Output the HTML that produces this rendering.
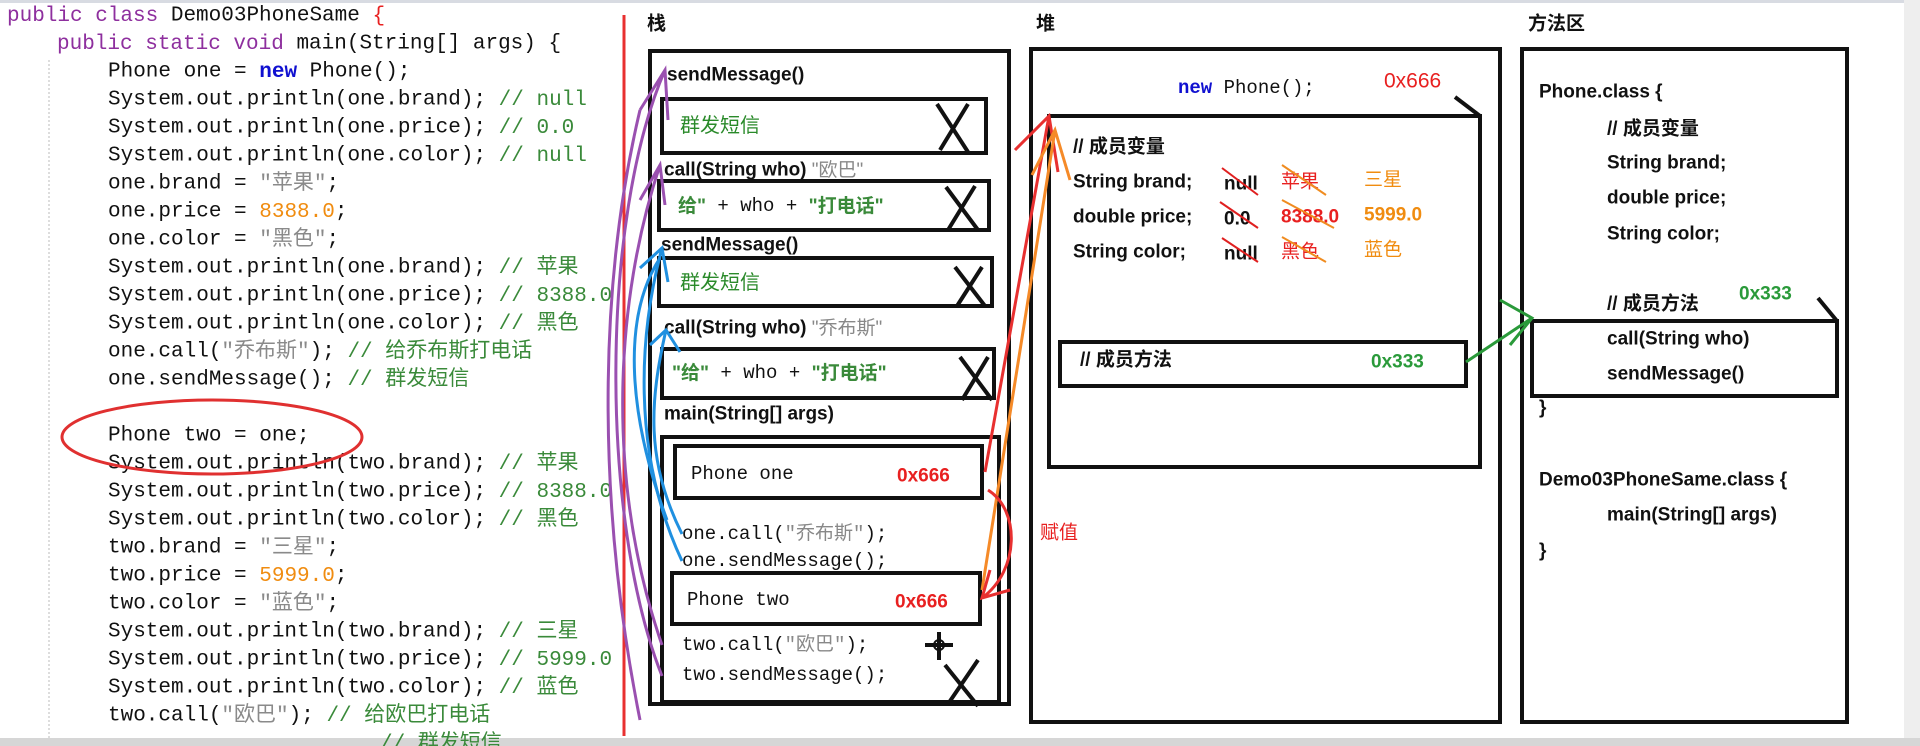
<!DOCTYPE html>
<html><head><meta charset="utf-8"><style>
html,body{margin:0;padding:0;background:#fff;width:1920px;height:746px;overflow:hidden}
svg{display:block}
.c{font-family:"Liberation Mono","Noto Sans CJK SC",monospace;font-size:21px;fill:#111}
.k{fill:#8e2f9e}.n{fill:#1010d0;font-weight:bold}.g{fill:#3a8a3a}.s{fill:#8a8a8a}.o{fill:#f08c10}.r{fill:#e82020}
.b{font-family:"Liberation Sans","Noto Sans CJK SC",sans-serif;font-size:19px;font-weight:bold;fill:#111}
.b.r{fill:#e82020}.b.o{fill:#f08c10}
.m{font-family:"Liberation Mono","Noto Sans CJK SC",monospace;font-size:19px;fill:#111}
.gb{font-family:"Liberation Sans","Noto Sans CJK SC",sans-serif;font-size:20px;fill:#2a8a2a}
</style></head><body>
<svg width="1920" height="746" viewBox="0 0 1920 746" xmlns="http://www.w3.org/2000/svg">
<rect x="0" y="0" width="1920" height="3" fill="#d8dbe2"/>
<rect x="1904" y="0" width="16" height="738" fill="#eeeeee"/>
<rect x="0" y="738" width="1920" height="8" fill="#d6d6d6"/>
<line x1="49" y1="60" x2="49" y2="738" stroke="#bbb" stroke-dasharray="2,2"/>
<g class="c" dominant-baseline="central" xml:space="preserve">
<text x="7" y="16"><tspan class="k">public class</tspan> Demo03PhoneSame <tspan class="r">{</tspan></text>
<text x="57" y="44"><tspan class="k">public static void</tspan> main(String[] args) {</text>
<text x="108" y="72">Phone one = <tspan class="n">new</tspan> Phone();</text>
<text x="108" y="100">System.out.println(one.brand); <tspan class="g">// null</tspan></text>
<text x="108" y="128">System.out.println(one.price); <tspan class="g">// 0.0</tspan></text>
<text x="108" y="156">System.out.println(one.color); <tspan class="g">// null</tspan></text>
<text x="108" y="184">one.brand = <tspan class="s">"苹果"</tspan>;</text>
<text x="108" y="212">one.price = <tspan class="o">8388.0</tspan>;</text>
<text x="108" y="240">one.color = <tspan class="s">"黑色"</tspan>;</text>
<text x="108" y="268">System.out.println(one.brand); <tspan class="g">// 苹果</tspan></text>
<text x="108" y="296">System.out.println(one.price); <tspan class="g">// 8388.0</tspan></text>
<text x="108" y="324">System.out.println(one.color); <tspan class="g">// 黑色</tspan></text>
<text x="108" y="352">one.call(<tspan class="s">"乔布斯"</tspan>); <tspan class="g">// 给乔布斯打电话</tspan></text>
<text x="108" y="380">one.sendMessage(); <tspan class="g">// 群发短信</tspan></text>
<text x="108" y="436">Phone two = one;</text>
<text x="108" y="464">System.out.println(two.brand); <tspan class="g">// 苹果</tspan></text>
<text x="108" y="492">System.out.println(two.price); <tspan class="g">// 8388.0</tspan></text>
<text x="108" y="520">System.out.println(two.color); <tspan class="g">// 黑色</tspan></text>
<text x="108" y="548">two.brand = <tspan class="s">"三星"</tspan>;</text>
<text x="108" y="576">two.price = <tspan class="o">5999.0</tspan>;</text>
<text x="108" y="604">two.color = <tspan class="s">"蓝色"</tspan>;</text>
<text x="108" y="632">System.out.println(two.brand); <tspan class="g">// 三星</tspan></text>
<text x="108" y="660">System.out.println(two.price); <tspan class="g">// 5999.0</tspan></text>
<text x="108" y="688">System.out.println(two.color); <tspan class="g">// 蓝色</tspan></text>
<text x="108" y="716">two.call(<tspan class="s">"欧巴"</tspan>); <tspan class="g">// 给欧巴打电话</tspan></text>
<text x="380" y="744"><tspan class="g">// 群发短信</tspan></text>
</g>
<ellipse cx="212" cy="437" rx="150" ry="37" fill="none" stroke="#e03030" stroke-width="3"/>
<line x1="624" y1="15" x2="624" y2="736" stroke="#e83030" stroke-width="3"/>

<g fill="none" stroke="#111" stroke-width="4">
<rect x="650" y="51" width="359" height="653"/>
<rect x="662" y="99" width="324" height="54"/>
<rect x="659" y="181" width="330" height="49"/>
<rect x="659" y="258" width="333" height="48"/>
<rect x="662" y="349" width="332" height="49"/>
<rect x="662" y="437" width="337" height="265"/>
<rect x="675" y="446" width="307" height="52"/>
<rect x="672" y="573" width="308" height="51"/>
<rect x="1031" y="49" width="469" height="673"/>
<path d="M1049 116 H1480 V467 H1049 Z"/>
<path d="M1455 97 L1480 116"/>
<rect x="1060" y="342" width="406" height="44"/>
<rect x="1522" y="49" width="325" height="673"/>
<path d="M1532 321 H1837 V396 H1532 Z"/>
<path d="M1818 298 L1837 321"/>
</g>
<g stroke="#111" stroke-width="4" fill="none">
<path d="M937 104 L968 152 M968 104 L940 150"/>
<path d="M946 187 L978 230 M975 186 L948 230"/>
<path d="M955 267 L985 306 M982 267 L957 306"/>
<path d="M960 357 L992 400 M988 357 L962 400"/>
<path d="M945 665 L978 706 M978 660 L948 704"/>
<path d="M925 645 h28 M939 632 v28"/>
</g>
<circle cx="939" cy="645" r="5" fill="none" stroke="#111" stroke-width="2"/>
<g dominant-baseline="central">
<text x="647" y="24" class="b">栈</text>
<text x="667" y="75" class="b">sendMessage()</text>
<text x="680" y="126" class="gb">群发短信</text>
<text x="664" y="170" class="b">call(String who) <tspan style="font-weight:normal;fill:#888">"欧巴"</tspan></text>
<text x="678" y="206" class="m"><tspan class="g" style="font-weight:bold;font-family:'Liberation Sans','Noto Sans CJK SC',sans-serif">给"</tspan> + who + <tspan class="g" style="font-weight:bold;font-family:'Liberation Sans','Noto Sans CJK SC',sans-serif">"打电话"</tspan></text>
<text x="661" y="245" class="b">sendMessage()</text>
<text x="680" y="283" class="gb">群发短信</text>
<text x="664" y="328" class="b">call(String who) <tspan style="font-weight:normal;fill:#888">"乔布斯"</tspan></text>
<text x="672" y="373" class="m"><tspan class="g" style="font-weight:bold;font-family:'Liberation Sans','Noto Sans CJK SC',sans-serif">"给"</tspan> + who + <tspan class="g" style="font-weight:bold;font-family:'Liberation Sans','Noto Sans CJK SC',sans-serif">"打电话"</tspan></text>
<text x="664" y="414" class="b">main(String[] args)</text>
<text x="691" y="474" class="m">Phone  one</text>
<text x="897" y="476" class="b r">0x666</text>
<text x="682" y="534" class="m">one.call(<tspan fill="#888">"乔布斯"</tspan>);</text>
<text x="682" y="561" class="m">one.sendMessage();</text>
<text x="687" y="600" class="m">Phone  two</text>
<text x="895" y="602" class="b r">0x666</text>
<text x="682" y="645" class="m">two.call(<tspan fill="#888">"欧巴"</tspan>);</text>
<text x="682" y="675" class="m">two.sendMessage();</text>

<text x="1036" y="24" class="b">堆</text>
<text x="1178" y="88" class="m"><tspan fill="#1010d0" font-weight="bold">new</tspan> Phone();</text>
<text x="1384" y="81" class="b r" style="font-weight:normal;font-size:21px">0x666</text>
<text x="1073" y="147" class="b">// 成员变量</text>
<text x="1073" y="182" class="b">String brand;</text>
<text x="1073" y="217" class="b">double price;</text>
<text x="1073" y="252" class="b">String color;</text>
<text x="1224" y="184" class="b">null</text>
<text x="1224" y="219" class="b">0.0</text>
<text x="1224" y="254" class="b">null</text>
<text x="1281" y="182" class="b r" style="font-weight:normal">苹果</text>
<text x="1281" y="217" class="b r">8388.0</text>
<text x="1281" y="252" class="b r" style="font-weight:normal">黑色</text>
<text x="1364" y="180" class="b o" style="font-weight:normal">三星</text>
<text x="1364" y="215" class="b o">5999.0</text>
<text x="1364" y="250" class="b o" style="font-weight:normal">蓝色</text>
<text x="1080" y="360" class="b">// 成员方法</text>
<text x="1371" y="362" class="b" style="fill:#2a9a3a">0x333</text>
<text x="1040" y="533" class="b r" style="font-weight:normal">赋值</text>

<text x="1528" y="24" class="b">方法区</text>
<text x="1539" y="92" class="b">Phone.class {</text>
<text x="1607" y="129" class="b">// 成员变量</text>
<text x="1607" y="163" class="b">String brand;</text>
<text x="1607" y="198" class="b">double price;</text>
<text x="1607" y="234" class="b">String color;</text>
<text x="1607" y="304" class="b">// 成员方法</text>
<text x="1739" y="294" class="b" style="fill:#2a9a3a">0x333</text>
<text x="1607" y="339" class="b">call(String who)</text>
<text x="1607" y="374" class="b">sendMessage()</text>
<text x="1539" y="408" class="b">}</text>
<text x="1539" y="480" class="b">Demo03PhoneSame.class {</text>
<text x="1607" y="515" class="b">main(String[] args)</text>
<text x="1539" y="551" class="b">}</text>
</g>
<g stroke-width="2" fill="none">
<path d="M1222 168 L1258 195 M1220 202 L1258 228 M1222 238 L1258 262" stroke="#e02020"/>
<path d="M1282 165 L1326 195 M1282 200 L1334 228 M1282 237 L1326 262" stroke="#f08c20"/>
</g>
<g fill="none" stroke-width="3">
<path d="M662 676 C600 520 600 220 665 70 M640 110 L665 70 L668 120" stroke="#9a50b0"/>
<path d="M662 645 C605 480 615 300 660 165 M640 200 L660 165 L665 205" stroke="#9a50b0"/>
<path d="M640 720 C600 520 595 300 640 110" stroke="#9a50b0"/>
<path d="M682 561 C630 450 640 330 662 248 M640 268 L662 248 L668 282" stroke="#2090e0"/>
<path d="M682 534 C645 460 650 400 666 330 M650 345 L666 330 L680 352" stroke="#2090e0"/>
<path d="M667 520 C630 420 620 320 660 258" stroke="#2090e0"/>
<path d="M985 472 L1049 116 M1015 150 L1049 116 L1058 172" stroke="#e83030"/>
<path d="M982 590 L1055 130 M1032 175 L1055 130 L1070 180" stroke="#f58a28"/>
<path d="M988 490 C1020 510 1020 570 982 598 M990 570 L982 598 L1010 590" stroke="#e83030"/>
<path d="M1466 362 L1532 318 M1500 300 L1532 318 L1510 345" stroke="#2a9a3a"/>
</g>
</svg>
</body></html>
